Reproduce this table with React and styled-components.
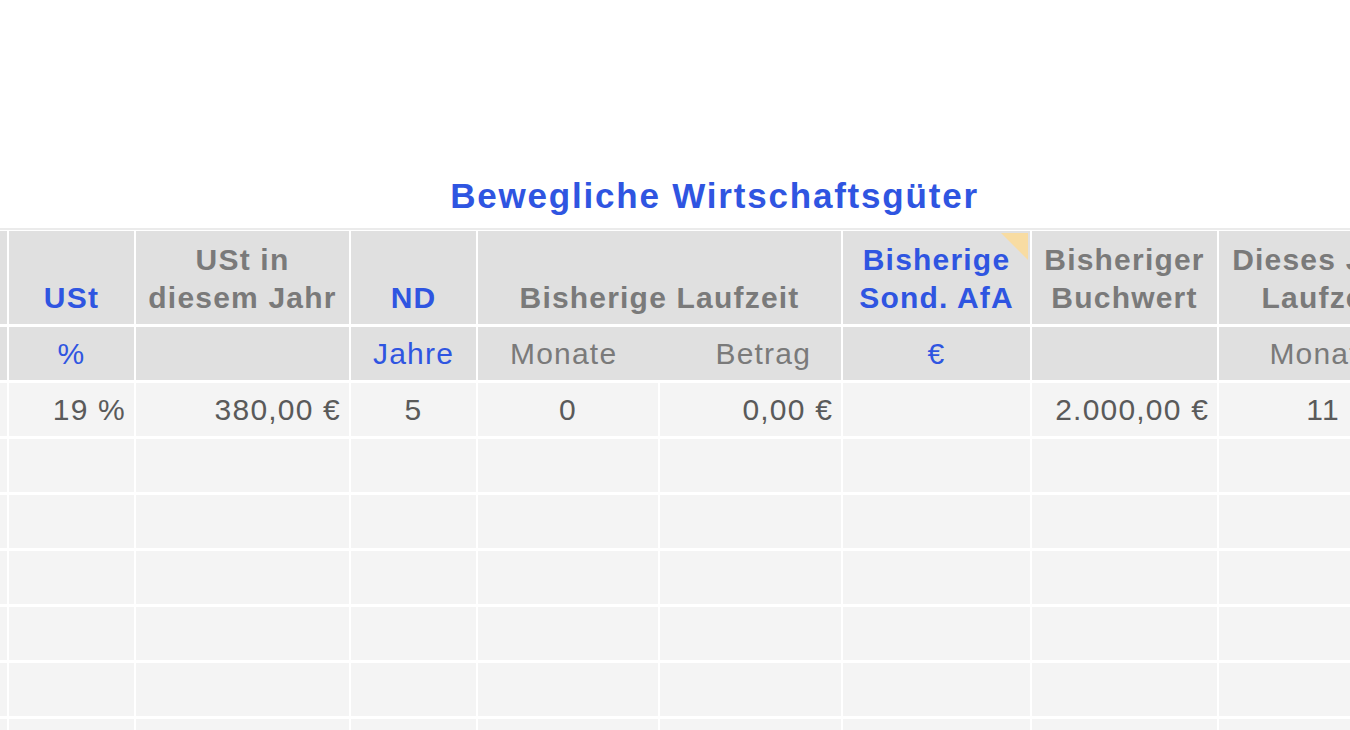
import styled, { createGlobalStyle } from 'styled-components'

const GlobalStyle = createGlobalStyle`
  html, body {
    margin: 0;
    padding: 0;
    background: #ffffff;
    overflow: hidden;
  }
  body {
    font-family: 'Liberation Sans', Arial, sans-serif;
  }
`

const BLUE = '#2f55e1'
const GRAY = '#7a7a7a'
const DARK = '#5a5a5a'

const cols = [120, 125, 213, 125, 180, 181, 187, 185, 208, 200]

const rows = [
  ['', '19 %', '380,00 €', '5', '0', '0,00 €', '', '2.000,00 €', '11', ''],
  ...Array.from({ length: 6 }, () => Array(10).fill('')),
]

const align = ['right', 'right', 'right', 'center', 'center', 'right', 'right', 'right', 'center', 'right']

const App = () => {
  return (
    <Page>
      <GlobalStyle />
      <Title>Bewegliche Wirtschaftsgüter</Title>
      <TableWrap>
        <Table>
          <colgroup>
            {cols.map((w, i) => (
              <col key={i} style={{ width: w }} />
            ))}
          </colgroup>
          <thead>
            <tr>
              <HeadCell />
              <HeadCell $blue>USt</HeadCell>
              <HeadCell>
                USt in
                <br />
                diesem Jahr
              </HeadCell>
              <HeadCell $blue>ND</HeadCell>
              <HeadCell colSpan={2}>Bisherige Laufzeit</HeadCell>
              <HeadCell $blue>
                Bisherige
                <br />
                Sond. AfA
                <CommentMark />
              </HeadCell>
              <HeadCell>
                Bisheriger
                <br />
                Buchwert
              </HeadCell>
              <HeadCell>
                Dieses Jahr
                <br />
                Laufzeit
              </HeadCell>
              <HeadCell />
            </tr>
            <tr>
              <SubCell />
              <SubCell $blue>%</SubCell>
              <SubCell />
              <SubCell $blue>Jahre</SubCell>
              <SubCell colSpan={2}>
                <Split>
                  <span>Monate</span>
                  <span>Betrag</span>
                </Split>
              </SubCell>
              <SubCell $blue>€</SubCell>
              <SubCell />
              <SubCell>Monate</SubCell>
              <SubCell />
            </tr>
          </thead>
          <tbody>
            {rows.map((row, r) => (
              <tr key={r}>
                {row.map((v, c) => (
                  <DataCell key={c} $align={align[c]}>
                    {v}
                  </DataCell>
                ))}
              </tr>
            ))}
          </tbody>
        </Table>
      </TableWrap>
    </Page>
  )
}

const Page = styled.div`
  padding-top: 176px;
  width: 1350px;
  height: 730px;
  box-sizing: border-box;
  overflow: hidden;
`

const Title = styled.h1`
  margin: 0 0 12px;
  padding-left: 79px;
  height: 40px;
  line-height: 40px;
  text-align: center;
  font-size: 35px;
  font-weight: 700;
  letter-spacing: 1.8px;
  color: ${BLUE};
`

const TableWrap = styled.div`
  border-top: 2px solid #ebebeb;
  overflow: hidden;
`

const Table = styled.table`
  table-layout: fixed;
  border-collapse: separate;
  border-spacing: 2px 3px;
  margin: -2px 0 0 -115px;
  width: ${cols.reduce((a, b) => a + b, 0) + (cols.length + 1) * 2}px;
  font-size: 30px;
  letter-spacing: 1.2px;
`

const HeadCell = styled.th`
  position: relative;
  height: 93px;
  padding: 0 4px 7px;
  box-sizing: border-box;
  vertical-align: bottom;
  text-align: center;
  white-space: nowrap;
  overflow: hidden;
  line-height: 38px;
  font-weight: 700;
  background: #e0e0e0;
  color: ${(p) => (p.$blue ? BLUE : GRAY)};
`

const SubCell = styled.td`
  height: 53px;
  padding: 0 4px;
  box-sizing: border-box;
  text-align: center;
  white-space: nowrap;
  overflow: hidden;
  background: #e0e0e0;
  color: ${(p) => (p.$blue ? BLUE : GRAY)};
`

const Split = styled.div`
  display: flex;
  justify-content: space-between;
  padding: 0 26px 0 28px;
`

const DataCell = styled.td`
  height: 53px;
  padding: 0 8px;
  box-sizing: border-box;
  text-align: ${(p) => p.$align};
  white-space: nowrap;
  overflow: hidden;
  background: #f4f4f4;
  color: ${DARK};
`

const CommentMark = styled.span`
  position: absolute;
  top: 2px;
  right: 2px;
  width: 0;
  height: 0;
  border-top: 27px solid #f8dca2;
  border-left: 27px solid transparent;
`

export default App
